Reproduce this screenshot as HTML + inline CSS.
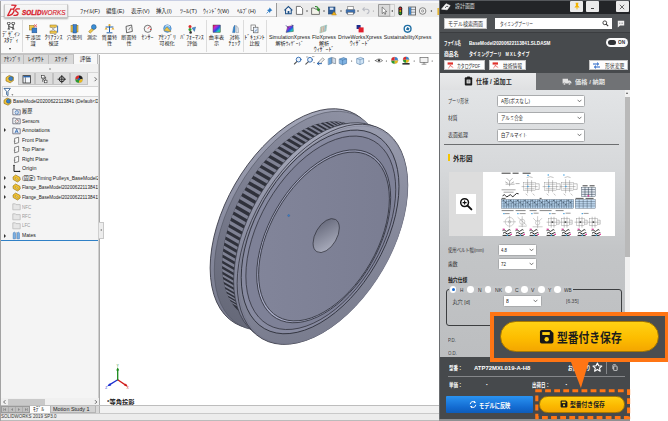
<!DOCTYPE html>
<html lang="ja">
<head>
<meta charset="utf-8">
<title>SOLIDWORKS</title>
<style>
*{box-sizing:border-box;margin:0;padding:0}
html,body{width:668px;height:421px;overflow:hidden;background:#fff}
body{position:relative;font-family:"Liberation Sans","Noto Sans CJK JP",sans-serif;font-size:6px;color:#222;line-height:1}
.abs{position:absolute}
.t{position:absolute;white-space:nowrap;line-height:1}
.c{transform:translateX(-50%);text-align:center}
/* ---- SolidWorks window ---- */
#sw{position:absolute;left:0;top:0;width:440px;height:421px;background:#fff}
#menubar{position:absolute;left:0;top:0;width:440px;height:17px;background:#f7f7f8;border-top:1px solid #c9cfe4;border-bottom:1px solid #d2d2d2}
#ribbon{position:absolute;left:0;top:17px;width:440px;height:37px;background:#fafafa;border-bottom:1px solid #c4c4c4}
.menu{font-size:5.8px;color:#1a1a1a;top:7.6px}
.rl{font-size:5.9px;color:#1a1a1a;line-height:6.4px;text-align:center;transform:translateX(-50%);top:33.5px;position:absolute;white-space:nowrap}
.rl .k{font-size:5.1px}
.rsep{position:absolute;top:20px;width:1px;height:32px;background:#dcdcdc}
.ico{position:absolute;top:24px;width:9px;height:9px;transform:translateX(-50%)}
#ctabs{position:absolute;left:0;top:54px;width:99px;height:10px;background:#e4e4e4}
.ctab{position:absolute;top:0;height:10px;background:#d9d9d9;border-right:1px solid #bdbdbd;border-top:1px solid #c4c4c4;font-size:5.9px;color:#222;text-align:center;line-height:9px}
#tree{position:absolute;left:0;top:64px;width:99px;height:342px;background:#f4f4f4;border-left:1px solid #bfbfbf}
.tr{max-width:none}
.tr{position:absolute;left:21px;font-size:5.6px;color:#222;white-space:nowrap;line-height:1}
.tri{position:absolute;left:3.4px;width:0;height:0;border-left:2.6px solid #333;border-top:2px solid transparent;border-bottom:2px solid transparent}
#view{position:absolute;left:99px;top:55px;width:341px;height:351px;background:#fff;border-left:1px solid #a9a9a9}
/* ---- right panel ---- */
#pn .t{margin-top:1px}
.tr{margin-top:.7px}
#pn{position:absolute;left:439px;top:0;width:191px;height:421px;background:#4b4e51;color:#fff}
</style>
</head>
<body>
<div id="sw">
<div id="menubar">
  <!-- logo tab -->
  <div class="abs" style="left:4.4px;top:2.6px;width:63.6px;height:14.8px;background:linear-gradient(#f7f7f7,#eeeeee);border:1px solid #c6c6c6;border-top:1px solid #e2e2e2;box-shadow:0 1px 1.6px rgba(0,0,0,.3);z-index:2"></div>
  <svg class="abs" style="left:7px;top:3px;z-index:3" width="14" height="13" viewBox="0 0 14 13"><path d="M4.8 1.2 L9 1.4 L6.8 4.6 M3.6 5.2 L6 5.1 Q7.6 5.4 6.8 7.8 Q5.8 10.6 2.6 11.3 L.7 11.5 L3.9 5.4 M12.4 4.9 L9.8 4.9 Q8.5 5.2 8.7 6.6 Q8.9 7.6 10.2 8.1 Q11.5 8.7 10.9 10.1 Q10.3 11.3 8.7 11.3 L6.9 11.3" fill="none" stroke="#d9232e" stroke-width="1.35" stroke-linecap="round" stroke-linejoin="round"/></svg>
  <div class="t" style="transform-origin:0 0;transform:scaleX(0.926);left:21.6px;top:8.6px;font-size:6.9px;font-style:italic;font-weight:bold;color:#d9232e;z-index:3"><span style="-webkit-text-stroke:.35px #d9232e">SOLID</span><span style="font-weight:normal;-webkit-text-stroke:.15px #d9232e">WORKS</span></div>






  <div class="t menu" style="transform-origin:0 0;transform:scaleX(1.053);left:79.5px">ﾌｧｲﾙ(F)</div>
  <div class="t menu" style="transform-origin:0 0;transform:scaleX(0.944);left:106px">編集(E)</div>
  <div class="t menu" style="transform-origin:0 0;transform:scaleX(0.97);left:130.5px">表示(V)</div>
  <div class="t menu" style="transform-origin:0 0;transform:scaleX(0.922);left:155.75px">挿入(I)</div>
  <div class="t menu" style="transform-origin:0 0;transform:scaleX(1.055);left:179.5px">ﾂｰﾙ(T)</div>
  <div class="t menu" style="transform-origin:0 0;transform:scaleX(0.982);left:203.25px">ｳｨﾝﾄﾞｳ(W)</div>
  <div class="t menu" style="transform-origin:0 0;transform:scaleX(0.954);left:236.5px">ﾍﾙﾌﾟ(H)</div>
  <!-- pin -->
  <svg class="abs" style="left:266px;top:6px" width="7" height="7" viewBox="0 0 7 7"><path d="M3.6 .6 L6.4 3.4 L5.2 3.8 L4.2 4.8 L4 6 L1 3 L2.2 2.8 L3.2 1.8 Z" fill="#2e7bc4"/><path d="M2.4 4.6 L.6 6.4" stroke="#2e7bc4" stroke-width=".8"/></svg>
  <!-- quick access toolbar -->
  <div class="abs" style="left:276px;top:2px;width:164px;height:14px;background:#ebebeb;border-left:1px solid #9a9a9a"></div>
  <svg class="abs" style="left:276px;top:2px" width="164" height="14" viewBox="0 0 164 14">
    <!-- home -->
    <path d="M8.4 7.4 L12.4 3.6 L16.4 7.4 M9.6 6.8 V10.8 H15.2 V6.8" fill="#fff" stroke="#1d4f86" stroke-width="1.1"/><rect x="11.6" y="8" width="1.8" height="2.8" fill="#1d4f86"/>
    <!-- new -->
    <path d="M20.4 3.4 H24.4 L26.6 5.6 V11.4 H20.4 Z" fill="#fff" stroke="#555" stroke-width=".8"/>
    <circle cx="31" cy="8" r=".7" fill="#333"/>
    <!-- open -->
    <path d="M35.6 5 H38.2 L39 6 H43.4 V11.4 H35.6 Z" fill="#f3f3ea" stroke="#555" stroke-width=".8"/><path d="M39 3.6 Q42.6 3.2 42.4 7.2 M40.8 6 L42.4 7.6 L43.8 5.8" fill="none" stroke="#2c8a2c" stroke-width="1.1"/>
    <circle cx="48" cy="8" r=".7" fill="#333"/>
    <!-- save -->
    <rect x="52.4" y="4" width="6.6" height="7" fill="#2c5d9b" stroke="#24446e" stroke-width=".6"/><rect x="53.8" y="4.6" width="3.6" height="2.2" fill="#dfe8f4"/><path d="M58 8.4 L60.4 12 H55.6 Z" fill="#f2b21b" stroke="#9a6a00" stroke-width=".4"/>
    <circle cx="65" cy="8" r=".7" fill="#333"/>
    <!-- print -->
    <rect x="70.2" y="6.4" width="8.6" height="4" rx=".8" fill="#3a6fb0" stroke="#24446e" stroke-width=".5"/><rect x="71.8" y="3.6" width="5.4" height="3" fill="#fff" stroke="#555" stroke-width=".5"/><rect x="71.8" y="9.2" width="5.4" height="2.6" fill="#fff" stroke="#555" stroke-width=".5"/>
    <circle cx="82" cy="8" r=".7" fill="#333"/>
    <!-- undo (disabled) -->
    <path d="M87 6.2 H91 Q93.2 6.4 93 8.6 Q92.8 10.4 90.8 10.6 M88.6 4.4 L86.8 6.2 L88.6 8" fill="none" stroke="#b9bcc4" stroke-width="1.1"/>
    <circle cx="97.4" cy="8" r=".6" fill="#999"/>
    <!-- select (boxed) -->
    <rect x="102.6" y="1.6" width="11.4" height="11.6" fill="#dadada" stroke="#8a8a8a" stroke-width=".8"/><path d="M106.2 4 L110.8 8.6 L108.8 8.8 L109.8 11 L108.8 11.4 L107.8 9.2 L106.2 10.6 Z" fill="#fff" stroke="#444" stroke-width=".6"/>
    <rect x="114" y="1.6" width="4.6" height="11.6" fill="#ececec" stroke="#b0b0b0" stroke-width=".5"/><circle cx="116.3" cy="8" r=".7" fill="#222"/>
    <!-- traffic light -->
    <rect x="122.4" y="3.6" width="3.8" height="8.6" rx="1.6" fill="#222"/><circle cx="124.3" cy="5.6" r="1.1" fill="#e02a2a"/><circle cx="124.3" cy="8" r="1" fill="#d8b100"/><circle cx="124.3" cy="10.3" r="1.1" fill="#2aa52a"/>
    <!-- table -->
    <rect x="132.6" y="4" width="7" height="8" fill="#e8eef6" stroke="#555" stroke-width=".8"/><path d="M135 4 V12 M135 6.6 H139.6 M135 9.2 H139.6" stroke="#555" stroke-width=".6"/><rect x="133" y="4.4" width="2" height="7.2" fill="#3a7ec2"/>
    <!-- options -->
    <circle cx="146.6" cy="8" r="3.3" fill="#f2f2f2" stroke="#777" stroke-width=".9"/><circle cx="146.6" cy="8" r="1.1" fill="none" stroke="#777" stroke-width=".7"/>
    <circle cx="155.4" cy="8" r=".7" fill="#333"/>
    <rect x="161.4" y="5" width="2" height="7" fill="#e5b534"/>
  </svg>
</div>

<div id="ribbon">
  <div class="rsep" style="left:22px;top:3px"></div>
  <div class="rsep" style="left:206px;top:3px"></div>
  <div class="rsep" style="left:243px;top:3px"></div>
  <div class="rsep" style="left:266px;top:3px"></div>
  <!-- labels (top relative to ribbon) -->
  <div class="rl" style="left:11px;top:14px">ﾃﾞｻﾞｲﾝ<br>ｽﾀﾃﾞｨ</div>
  <div class="abs" style="left:9.4px;top:30.6px;border-top:2px solid #333;border-left:1.6px solid transparent;border-right:1.6px solid transparent"></div>
  <div class="rl" style="left:33px;top:16.5px"><span class="k">干渉認</span><br><span class="k">識</span></div>
  <div class="rl" style="left:53.5px;top:16.5px">ｸﾘｱﾗﾝｽ<br><span class="k">検証</span></div>
  <div class="rl" style="left:74.5px;top:16.5px"><span class="k">穴整列</span></div>
  <div class="rl" style="left:92px;top:16.5px"><span class="k">測定</span></div>
  <div class="rl" style="left:109.5px;top:16.5px"><span class="k">質量特</span><br><span class="k">性</span></div>
  <div class="rl" style="left:129px;top:16.5px"><span class="k">断面特</span><br><span class="k">性</span></div>
  <div class="rl" style="left:147.5px;top:16.5px">ｾﾝｻｰ</div>
  <div class="rl" style="left:167px;top:16.5px">ｱｾﾝﾌﾞﾘ<br><span class="k">可視化</span></div>
  <div class="rl" style="left:192px;top:16.5px">ﾊﾟﾌｫｰﾏﾝｽ<br><span class="k">評価</span></div>
  <div class="rl" style="left:216.5px;top:16.5px"><span class="k">曲率表</span><br><span class="k">示</span></div>
  <div class="rl" style="left:234.5px;top:16.5px"><span class="k">対称</span><br>ﾁｪｯｸ</div>
  <div class="rl" style="left:254.5px;top:16.5px">ﾄﾞｷｭﾒﾝﾄ<br><span class="k">比較</span></div>
  <div class="rl" style="left:289.5px;top:16.5px"><span style="font-size:5.3px">SimulationXpress</span><br><span class="k">解析ｳｨｻﾞｰﾄﾞ</span></div>
  <div class="rl" style="left:324px;top:16.5px"><span style="font-size:5.3px">FloXpress</span><br><span class="k">解析</span><br>ｳｨｻﾞｰﾄﾞ</div>
  <div class="rl" style="left:360px;top:16.5px"><span style="font-size:5.3px">DriveWorksXpress</span><br>ｳｨｻﾞｰﾄﾞ</div>
  <div class="rl" style="left:407.5px;top:16.5px"><span style="font-size:5.3px">SustainabilityXpress</span></div>
  <!-- icons -->
  <svg class="abs" style="left:0;top:5px" width="440" height="14" viewBox="0 0 440 14">
    <!-- design study: two keys-ish -->
    <g fill="none" stroke="#333" stroke-width=".9"><circle cx="8.8" cy="1.4" r="1.4"/><circle cx="13.2" cy="1.4" r="1.4"/><path d="M8.8 2.8 V7 M13.2 2.8 V7 M8.8 4.6 L13.2 5.8 M7.6 7 H10 M12 7 H14.4"/></g>
    <!-- interference -->
    <rect x="29.4" y="3.4" width="4.6" height="4.6" fill="#f2c94c" stroke="#8a6d1a" stroke-width=".5"/><rect x="32" y="6" width="4.8" height="4.8" fill="#3b7fcc" stroke="#1d4f86" stroke-width=".5"/><path d="M34 2.4 L37 5.2 M37 2.4 L34 5.2" stroke="#e03030" stroke-width=".7"/>
    <!-- clearance -->
    <rect x="50" y="3" width="6.4" height="2.2" fill="#f2c94c" stroke="#8a6d1a" stroke-width=".5"/><rect x="50" y="9" width="6.4" height="2.2" fill="#f2c94c" stroke="#8a6d1a" stroke-width=".5"/><path d="M51.4 5.4 L55 8.8 M55 5.4 L51.4 8.8" stroke="#777" stroke-width=".6"/><path d="M57.6 3.6 V10.6" stroke="#2b66b0" stroke-width=".9"/>
    <!-- hole alignment -->
    <rect x="71" y="3.4" width="7" height="6.6" fill="#f2c94c" stroke="#8a6d1a" stroke-width=".5"/><rect x="73" y="2.6" width="3.4" height="8.4" fill="#3b7fcc" stroke="#1d4f86" stroke-width=".5"/>
    <!-- measure -->
    <path d="M88.6 9.6 L94.6 3.8 L96.2 5.4 L90.2 11.2 Z" fill="#f2c94c" stroke="#8a6d1a" stroke-width=".5"/><circle cx="93.8" cy="5" r="2.4" fill="#3b8fd6" stroke="#1d4f86" stroke-width=".5"/>
    <!-- mass props -->
    <path d="M109.5 3 V10 M105.6 5 H113.4 M106.6 10.8 H112.4" stroke="#1f5fa8" stroke-width="1"/><path d="M104.6 7.6 H107.6 L106.1 5.2 Z M111.4 7.6 H114.4 L112.9 5.2 Z" fill="#e2a827"/><circle cx="109.5" cy="3.2" r="1.1" fill="#e2a827"/>
    <!-- section props -->
    <path d="M126 4.4 L131.6 3 L132.4 9.4 L126.6 10.8 Z" fill="#f4f4f4" stroke="#444" stroke-width=".8"/><path d="M128.6 8 L130.6 5" stroke="#444" stroke-width=".6"/>
    <!-- sensor -->
    <circle cx="147.8" cy="6.8" r="3.6" fill="#f6f6f6" stroke="#555" stroke-width=".8"/><path d="M147.8 6.8 L149.8 4.4" stroke="#d33" stroke-width=".8"/><circle cx="150.6" cy="7.4" r=".7" fill="#d33"/>
    <!-- assembly visualization -->
    <circle cx="167.4" cy="6.6" r="3.8" fill="#6db2e8" stroke="#2b66b0" stroke-width=".5"/><path d="M164 8.6 L167 5 L171 9.8 Z" fill="#f2c94c" stroke="#8a6d1a" stroke-width=".4"/><path d="M165.4 4.2 Q167.6 2.6 170 4.4" stroke="#fff" stroke-width=".8" fill="none"/>
    <!-- performance -->
    <circle cx="190" cy="4.4" r="1.5" fill="#d92c2c"/><circle cx="190" cy="7.6" r="1.5" fill="#2d9a2d"/><circle cx="190.6" cy="10.4" r="1.3" fill="#333"/><path d="M192 6 L195.6 5 L194.4 9.4 Z" fill="#4a90d9" stroke="#1d4f86" stroke-width=".4"/>
    <!-- curvature -->
    <defs><linearGradient id="rb" x1="0" y1="0" x2="1" y2="1"><stop offset="0" stop-color="#e6222e"/><stop offset=".3" stop-color="#c22ad6"/><stop offset=".55" stop-color="#2a4fe0"/><stop offset=".75" stop-color="#1fc3c9"/><stop offset="1" stop-color="#3bd23b"/></linearGradient></defs>
    <rect x="213" y="3" width="7.4" height="7.4" fill="url(#rb)" stroke="#333" stroke-width=".4"/>
    <!-- symmetry check -->
    <path d="M232.6 10.6 L233.6 5 L235 3 V10.6 Z" fill="#3b8fd6" stroke="#1d4f86" stroke-width=".4"/><path d="M236 10.6 V3.6 L238.2 5.6 L238.6 10.6 Z" fill="#dfe6ee" stroke="#66707c" stroke-width=".4"/>
    <!-- doc compare -->
    <rect x="251" y="3" width="4.4" height="5.6" fill="#fff" stroke="#555" stroke-width=".6"/><rect x="253.6" y="5.2" width="4.4" height="5.6" fill="#e6eef8" stroke="#555" stroke-width=".6"/><path d="M255 9.6 L256.8 7.6" stroke="#2b66b0" stroke-width=".8"/>
    <!-- simulationxpress -->
    <path d="M286 10.4 L287.6 4.6 L293 3.4 L293.4 9.4 Z" fill="url(#rb)" stroke="#444" stroke-width=".4"/><path d="M286 3.4 L289 6.4 M292 2.6 L293.4 4" stroke="#2b2b8a" stroke-width=".8"/>
    <!-- floxpress -->
    <path d="M320.6 5 L326.8 3 L326 9 L319.8 11 Z" fill="#bfe1c6" stroke="#7a9" stroke-width=".4"/><path d="M322 4.8 L321.2 10.4 M324 4.2 L323.2 9.8" stroke="#d88" stroke-width=".7"/><path d="M325.6 3.6 L324.8 9.2" stroke="#79c" stroke-width=".7"/>
    <!-- driveworks -->
    <rect x="356.6" y="3" width="4" height="4" fill="#1d2d8c"/><rect x="358.6" y="5.4" width="5" height="5" fill="#e01f2d"/>
    <!-- sustainability -->
    <circle cx="407.6" cy="6.8" r="3.4" fill="#fff" stroke="#1f6ea3" stroke-width="1.4"/><path d="M405.8 7.6 L407.4 5 L409.6 6.4 L408.4 8.6 Z" fill="#1f6ea3"/>
  </svg>
</div>

<div id="ctabs">
<div class="ctab" style="left:1px;width:23px;"><span class="t c" style="transform:translateX(-50%) scaleX(0.934);left:50%;top:2.4px;">ｱｾﾝﾌﾞﾘ</span></div>
<div class="ctab" style="left:24px;width:24.5px;"><span class="t c" style="transform:translateX(-50%) scaleX(1.086);left:50%;top:2.4px;">ﾚｲｱｳﾄ</span></div>
<div class="ctab" style="left:48.5px;width:25px;"><span class="t c" style="transform:translateX(-50%) scaleX(1.103);left:50%;top:2.4px;">ｽｹｯﾁ</span></div>
<div class="ctab" style="left:73.5px;width:24.5px;background:#f8f8f8;border-top:none;"><span class="t c" style="transform:translateX(-50%) scaleX(1.0);left:50%;top:3.4px;font-size:5.6px;">評価</span></div>
</div>
<div id="tree">
<div class="abs" style="left:0;top:0;width:98px;height:9px;background:#f1f1f1;border-bottom:1px solid #d6d6d6"></div><div class="abs" style="left:47.5px;top:3.6px;width:2px;height:2px;border-radius:50%;background:#aaa"></div>
<div class="abs" style="left:0;top:9px;width:98px;height:13px;background:#f2f2f2"></div>
<div class="abs" style="left:1px;top:9px;width:16px;height:13px;background:#f7f7f7"></div>
<div class="abs" style="left:16.5px;top:9px;width:17.5px;height:12px;background:#dcdcdc;border:1px solid #c2c2c2;border-top:none"></div>
<div class="abs" style="left:34px;top:9px;width:17.5px;height:12px;background:#dcdcdc;border:1px solid #c2c2c2;border-top:none"></div>
<div class="abs" style="left:51.5px;top:9px;width:17.5px;height:12px;background:#dcdcdc;border:1px solid #c2c2c2;border-top:none"></div>
<div class="abs" style="left:69px;top:9px;width:17.5px;height:12px;background:#dcdcdc;border:1px solid #c2c2c2;border-top:none"></div>
<svg class="abs" style="left:0;top:9px" width="98" height="13" viewBox="0 0 98 13">
<path d="M5 4.6 L8.2 2.4 L12.4 4 L12.4 7.6 L9.2 9.8 L5 8 Z" fill="#f0c23a" stroke="#8a6a12" stroke-width=".6"/><circle cx="9.8" cy="5.6" r="2.1" fill="#3b82cc" stroke="#1d4f86" stroke-width=".5"/>
<rect x="22" y="2.6" width="7.4" height="7.4" fill="#f4f7fb" stroke="#333" stroke-width=".8"/><rect x="22.4" y="3" width="6.6" height="1.4" fill="#2b66b0"/><path d="M24.4 4.4 V10" stroke="#333" stroke-width=".6"/>
<rect x="40.6" y="2.4" width="2.6" height="2.6" fill="#fff" stroke="#333" stroke-width=".6"/><rect x="43.4" y="7.2" width="2.6" height="2.6" fill="#fff" stroke="#333" stroke-width=".6"/><path d="M41.8 5 V9 M41.8 7.4 L44.6 4.2 M44.6 3.6 V7" stroke="#333" stroke-width=".6" fill="none"/>
<circle cx="60.8" cy="6.2" r="2.6" fill="none" stroke="#111" stroke-width=".9"/><path d="M60.8 2 V10.4 M56.6 6.2 H65" stroke="#111" stroke-width=".8"/>
<circle cx="78" cy="6.2" r="3.6" fill="#fff" stroke="#555" stroke-width=".4"/><path d="M78 6.2 L78 2.6 A3.6 3.6 0 0 1 81.6 6.2 Z" fill="#222"/><path d="M78 6.2 L81.6 6.2 A3.6 3.6 0 0 1 78 9.8 Z" fill="#e8b81c"/><path d="M78 6.2 L78 9.8 A3.6 3.6 0 0 1 74.4 6.2 Z" fill="#2d9a2d"/><path d="M78 6.2 L74.4 6.2 A3.6 3.6 0 0 1 78 2.6 Z" fill="#d92c2c"/><circle cx="78" cy="6.2" r="1.2" fill="#2b66b0"/>
<path d="M93.6 4.2 L95.6 6.2 L93.6 8.2" fill="none" stroke="#444" stroke-width=".8"/>
</svg>
<div class="abs" style="left:1px;top:22px;width:97px;height:11px;background:#fafafa;border:1px solid #d4d4d4"></div>
<svg class="abs" style="left:2px;top:23px" width="12" height="10" viewBox="0 0 12 10"><path d="M1 1.4 H7.4 L5 4.4 V8.6 L3.6 7.6 V4.4 Z" fill="#fff" stroke="#1d4f86" stroke-width=".8" stroke-linejoin="round"/><path d="M8.4 7.4 H10.4 L9.4 8.6 Z" fill="#222"/></svg>
<svg class="abs" style="left:2px;top:32.8px" width="9" height="9" viewBox="0 0 9 9"><path d="M1 3.2 L4 1 L8 2.6 L8 6 L5 8.2 L1 6.4 Z" fill="#f0c23a" stroke="#8a6a12" stroke-width=".6"/><circle cx="5.4" cy="4.2" r="2" fill="#3b82cc" stroke="#1d4f86" stroke-width=".5"/></svg>
<div class="tr" style="transform-origin:0 0;transform:scaleX(0.86);left:11.5px;top:34.4px;color:#222">BaseModel20200622113841 (Default&lt;D</div>
<svg class="abs" style="left:11px;top:42.8px" width="9" height="9" viewBox="0 0 9 9"><path d="M.8 2 H3.4 L4 2.8 H8.2 V7.8 H.8 Z" fill="#f1f4f8" stroke="#556" stroke-width=".7"/><circle cx="4.8" cy="5.4" r="1.7" fill="#fff" stroke="#2b66b0" stroke-width=".7"/><path d="M4.8 4.4 V5.4 L5.6 5.8" stroke="#2b66b0" stroke-width=".5" fill="none"/></svg>
<div class="tr" style="transform-origin:0 0;transform:scaleX(0.919);left:21px;top:44.4px;color:#222">履歴</div>
<svg class="abs" style="left:11px;top:52.3px" width="9" height="9" viewBox="0 0 9 9"><path d="M.8 2 H3.4 L4 2.8 H8.2 V7.8 H.8 Z" fill="#f1f4f8" stroke="#556" stroke-width=".7"/><circle cx="4.8" cy="5.4" r="1.7" fill="#fff" stroke="#555" stroke-width=".6"/><path d="M4.8 5.4 L5.8 4.4" stroke="#d33" stroke-width=".7"/></svg>
<div class="tr" style="transform-origin:0 0;transform:scaleX(0.852);left:21px;top:53.9px;color:#222">Sensors</div>
<svg class="abs" style="left:11px;top:61.8px" width="9" height="9" viewBox="0 0 9 9"><path d="M.8 2 H3.4 L4 2.8 H8.2 V7.8 H.8 Z" fill="#f1f4f8" stroke="#556" stroke-width=".7"/><path d="M3 7 L4.6 3.4 L6.2 7 M3.6 5.8 H5.6" stroke="#2b66b0" stroke-width=".8" fill="none"/></svg>
<div class="tr" style="transform-origin:0 0;transform:scaleX(0.948);left:21px;top:63.4px;color:#222">Annotations</div>
<div class="tri" style="top:64.3px"></div>
<svg class="abs" style="left:11px;top:71.5px" width="9" height="9" viewBox="0 0 9 9"><path d="M2.6 2.4 L6.6 1.2 V6.6 L2.6 7.8 Z" fill="#fbfbfb" stroke="#555" stroke-width=".7"/><path d="M1.8 5.2 H3.4" stroke="#555" stroke-width=".5"/></svg>
<div class="tr" style="transform-origin:0 0;transform:scaleX(0.909);left:21px;top:73.1px;color:#222">Front Plane</div>
<svg class="abs" style="left:11px;top:81.0px" width="9" height="9" viewBox="0 0 9 9"><path d="M2.6 2.4 L6.6 1.2 V6.6 L2.6 7.8 Z" fill="#fbfbfb" stroke="#555" stroke-width=".7"/><path d="M1.8 5.2 H3.4" stroke="#555" stroke-width=".5"/></svg>
<div class="tr" style="transform-origin:0 0;transform:scaleX(0.904);left:21px;top:82.6px;color:#222">Top Plane</div>
<svg class="abs" style="left:11px;top:90.5px" width="9" height="9" viewBox="0 0 9 9"><path d="M2.6 2.4 L6.6 1.2 V6.6 L2.6 7.8 Z" fill="#fbfbfb" stroke="#555" stroke-width=".7"/><path d="M1.8 5.2 H3.4" stroke="#555" stroke-width=".5"/></svg>
<div class="tr" style="transform-origin:0 0;transform:scaleX(0.909);left:21px;top:92.1px;color:#222">Right Plane</div>
<svg class="abs" style="left:11px;top:100.0px" width="9" height="9" viewBox="0 0 9 9"><path d="M2 1.2 V7.4 H8" fill="none" stroke="#111" stroke-width="1"/><path d="M2 .6 L1.2 2 H2.8 Z M8.6 7.4 L7.2 6.6 V8.2 Z" fill="#111"/></svg>
<div class="tr" style="transform-origin:0 0;transform:scaleX(0.972);left:21px;top:101.6px;color:#222">Origin</div>
<svg class="abs" style="left:11px;top:109.5px" width="9" height="9" viewBox="0 0 9 9"><path d="M1 3 L3.6 1 L8 3.4 L8.2 6 L5.6 8 L1.2 5.6 Z" fill="#f2c230" stroke="#8a6a12" stroke-width=".6"/><path d="M3.4 3.6 L6 5 L6 6.4 L3.4 5 Z" fill="#fbe9a6" stroke="#8a6a12" stroke-width=".4"/></svg>
<div class="tr" style="transform-origin:0 0;transform:scaleX(0.892);left:21px;top:111.1px;color:#222">(固定) Timing Pulleys_BaseModel2</div>
<div class="tri" style="top:112.0px"></div>
<svg class="abs" style="left:11px;top:118.8px" width="9" height="9" viewBox="0 0 9 9"><path d="M1 3 L3.6 1 L8 3.4 L8.2 6 L5.6 8 L1.2 5.6 Z" fill="#f2c230" stroke="#8a6a12" stroke-width=".6"/><path d="M3.4 3.6 L6 5 L6 6.4 L3.4 5 Z" fill="#fbe9a6" stroke="#8a6a12" stroke-width=".4"/></svg>
<div class="tr" style="transform-origin:0 0;transform:scaleX(0.829);left:21px;top:120.4px;color:#222">Flange_BaseModel202006221138411</div>
<div class="tri" style="top:121.3px"></div>
<svg class="abs" style="left:11px;top:128.3px" width="9" height="9" viewBox="0 0 9 9"><path d="M1 3 L3.6 1 L8 3.4 L8.2 6 L5.6 8 L1.2 5.6 Z" fill="#f2c230" stroke="#8a6a12" stroke-width=".6"/><path d="M3.4 3.6 L6 5 L6 6.4 L3.4 5 Z" fill="#fbe9a6" stroke="#8a6a12" stroke-width=".4"/></svg>
<div class="tr" style="transform-origin:0 0;transform:scaleX(0.829);left:21px;top:129.9px;color:#222">Flange_BaseModel202006221138411</div>
<div class="tri" style="top:130.8px"></div>
<svg class="abs" style="left:11px;top:138.3px" width="9" height="9" viewBox="0 0 9 9"><path d="M.8 1.8 H3.4 L4 2.6 H8.2 V7.8 H.8 Z" fill="#e6e6e6" stroke="#b5b5b5" stroke-width=".7"/></svg>
<div class="tr" style="transform-origin:0 0;transform:scaleX(0.809);left:21px;top:139.9px;color:#9a9a9a">NFC</div>
<svg class="abs" style="left:11px;top:147.8px" width="9" height="9" viewBox="0 0 9 9"><path d="M.8 1.8 H3.4 L4 2.6 H8.2 V7.8 H.8 Z" fill="#e6e6e6" stroke="#b5b5b5" stroke-width=".7"/></svg>
<div class="tr" style="transform-origin:0 0;transform:scaleX(0.765);left:21px;top:149.4px;color:#9a9a9a">RFC</div>
<svg class="abs" style="left:11px;top:157.1px" width="9" height="9" viewBox="0 0 9 9"><path d="M.8 1.8 H3.4 L4 2.6 H8.2 V7.8 H.8 Z" fill="#e6e6e6" stroke="#b5b5b5" stroke-width=".7"/></svg>
<div class="tr" style="transform-origin:0 0;transform:scaleX(0.785);left:21px;top:158.7px;color:#9a9a9a">LFC</div>
<svg class="abs" style="left:11px;top:167.0px" width="9" height="9" viewBox="0 0 9 9"><path d="M2.4 1.2 Q1 1.2 1.2 3 V7.8 H3.4 V3 Q3.6 1.2 2.4 1.2 Z M6.4 1.2 Q5 1.2 5.2 3 V7.8 H7.4 V3 Q7.6 1.2 6.4 1.2 Z" fill="#7fb6e6" stroke="#2b66b0" stroke-width=".5"/><path d="M4.3 1 V8" stroke="#777" stroke-width=".4"/></svg>
<div class="tr" style="transform-origin:0 0;transform:scaleX(0.906);left:21px;top:168.6px;color:#222">Mates</div>
<div class="tri" style="top:169.5px"></div>
<div class="abs" style="left:0;top:176.2px;width:98px;height:1.2px;background:#2f80c6"></div>
<div class="abs" style="left:97px;top:0;width:2px;height:342px;background:#e6e6e6;border-left:1px solid #cfcfcf"></div>
<div class="abs" style="left:98px;top:158px;width:5px;height:17px;background:#ededed;border:1px solid #c8c8c8;border-left:none;z-index:3"></div><div class="abs" style="left:99.4px;top:165px;border-right:2px solid #888;border-top:1.6px solid transparent;border-bottom:1.6px solid transparent;z-index:4"></div>
<div class="abs" style="left:0;top:334px;width:98px;height:8px;background:#f0f0f0"></div><div class="abs" style="left:7px;top:335px;width:37px;height:6px;background:#c9c9c9"></div>
<svg class="abs" style="left:0;top:334px" width="98" height="8" viewBox="0 0 98 8"><path d="M4.4 2.2 L2.6 4 L4.4 5.8 M94 2.2 L95.8 4 L94 5.8" fill="none" stroke="#444" stroke-width=".8"/></svg>
</div>
<div id="view">
<svg class="abs" style="left:0;top:0" width="340" height="351" viewBox="100 55 340 351">
<defs><linearGradient id="gf" x1="0" y1="0" x2="1" y2="1"><stop offset="0" stop-color="#83869b"/><stop offset="1" stop-color="#797c91"/></linearGradient><linearGradient id="ghl" x1="0" y1="0" x2="1" y2="1"><stop offset="0" stop-color="#aeb1cc"/><stop offset=".5" stop-color="#a0a3bd"/><stop offset="1" stop-color="#8b8ea6"/></linearGradient><linearGradient id="grim" gradientUnits="userSpaceOnUse" x1="210" y1="300" x2="410" y2="150"><stop offset="0" stop-color="#74778a"/><stop offset=".5" stop-color="#8a8da0"/><stop offset="1" stop-color="#a9acbd"/></linearGradient><linearGradient id="gband" gradientUnits="userSpaceOnUse" x1="230" y1="300" x2="410" y2="150"><stop offset="0" stop-color="#787b8d"/><stop offset=".6" stop-color="#8b8ea0"/><stop offset="1" stop-color="#9ea1b3"/></linearGradient><linearGradient id="gb" x1="1" y1="0" x2="0" y2="0"><stop offset="0" stop-color="#8e91a3"/><stop offset=".5" stop-color="#7b7e90"/><stop offset="1" stop-color="#666979"/></linearGradient><linearGradient id="gh" x1="1" y1="0" x2="0" y2="1"><stop offset="0" stop-color="#5f6274"/><stop offset="1" stop-color="#b3b6c6"/></linearGradient></defs>
<ellipse cx="295.4" cy="218.8" rx="120.6" ry="69.6" transform="rotate(-60 295.4 218.8)" fill="url(#grim)" stroke="#3a3c48" stroke-width="0.8" />
<ellipse cx="299.2" cy="220.9" rx="120.1" ry="69.3" transform="rotate(-60 299.2 220.9)" fill="url(#gb)" stroke="#4a4d5a" stroke-width="0.5" />
<polygon points="353.7,126.5 350.7,125.0 347.7,123.7 344.5,122.7 341.1,122.0 337.7,121.6 334.2,121.4 330.5,121.5 326.8,121.9 323.0,122.5 319.1,123.4 315.2,124.6 311.2,126.0 307.2,127.7 303.2,129.7 299.2,131.9 295.1,134.4 291.1,137.0 287.1,140.0 283.1,143.1 279.2,146.5 275.3,150.0 271.5,153.8 267.8,157.7 264.2,161.8 260.6,166.1 257.2,170.5 253.9,175.1 250.7,179.7 247.6,184.5 244.7,189.4 241.9,194.4 239.3,199.5 236.8,204.6 234.5,209.7 232.4,214.9 230.5,220.1 228.8,225.4 227.2,230.5 225.9,235.7 224.7,240.8 223.8,245.9 223.0,250.9 222.5,255.9 222.2,260.7 222.1,265.4 222.2,270.0 222.5,274.5 223.0,278.8 223.8,282.9 224.7,286.9 225.9,290.7 227.2,294.3 228.8,297.8 230.5,301.0 232.4,303.9 234.5,306.7 236.8,309.2 239.3,311.5 241.9,313.5 244.7,315.3 263.7,326.3 260.9,324.5 258.3,322.5 255.8,320.2 253.6,317.7 251.5,314.9 249.5,312.0 247.8,308.8 246.2,305.3 244.9,301.7 243.8,297.9 242.8,293.9 242.1,289.8 241.6,285.5 241.2,281.0 241.1,276.4 241.2,271.7 241.6,266.9 242.1,261.9 242.8,256.9 243.8,251.8 244.9,246.7 246.2,241.5 247.8,236.4 249.5,231.1 251.5,225.9 253.6,220.7 255.8,215.6 258.3,210.5 260.9,205.4 263.7,200.4 266.6,195.5 269.7,190.7 272.9,186.1 276.2,181.5 279.7,177.1 283.2,172.8 286.9,168.7 290.6,164.8 294.4,161.0 298.3,157.5 302.2,154.1 306.1,151.0 310.1,148.0 314.2,145.4 318.2,142.9 322.2,140.7 326.3,138.7 330.3,137.0 334.2,135.6 338.2,134.4 342.0,133.5 345.8,132.9 349.6,132.5 353.2,132.4 356.7,132.6 360.2,133.0 363.5,133.7 366.7,134.7 369.8,136.0 372.7,137.5" fill="#2f313b"/>
<path d="M353.3 126.3 L351.5 125.4 L370.6 136.4 L372.3 137.3Z M349.7 124.5 L347.9 123.8 L366.9 134.8 L368.8 135.5Z M346.0 123.2 L344.0 122.6 L363.1 133.6 L365.0 134.2Z M342.0 122.2 L340.0 121.8 L359.0 132.8 L361.1 133.2Z M337.9 121.6 L335.8 121.4 L354.9 132.4 L357.0 132.6Z M333.7 121.4 L331.5 121.4 L350.5 132.4 L352.7 132.4Z M329.3 121.6 L327.0 121.8 L346.1 132.8 L348.3 132.6Z M324.8 122.2 L322.5 122.6 L341.5 133.6 L343.8 133.2Z M320.2 123.1 L317.8 123.8 L336.8 134.8 L339.2 134.1Z M315.5 124.5 L313.1 125.3 L332.1 136.3 L334.5 135.5Z M310.7 126.2 L308.3 127.3 L327.3 138.3 L329.7 137.2Z M305.9 128.4 L303.5 129.6 L322.5 140.6 L324.9 139.4Z M301.0 130.8 L298.6 132.2 L317.7 143.2 L320.1 141.8Z M296.2 133.7 L293.8 135.2 L312.8 146.2 L315.2 144.7Z M291.4 136.9 L289.0 138.6 L308.0 149.6 L310.4 147.9Z M286.6 140.4 L284.2 142.2 L303.2 153.2 L305.6 151.4Z M281.8 144.2 L279.5 146.2 L298.5 157.2 L300.9 155.2Z M277.1 148.3 L274.8 150.5 L293.9 161.5 L296.2 159.3Z M272.6 152.7 L270.3 155.1 L289.3 166.1 L291.6 163.7Z M268.1 157.4 L265.9 159.9 L284.9 170.9 L287.1 168.4Z M263.7 162.4 L261.6 164.9 L280.6 175.9 L282.7 173.4Z M259.5 167.5 L257.4 170.2 L276.5 181.2 L278.5 178.5Z M255.4 172.9 L253.4 175.7 L272.5 186.7 L274.4 183.9Z M251.5 178.5 L249.6 181.3 L268.7 192.3 L270.5 189.5Z M247.8 184.2 L246.0 187.1 L265.1 198.1 L266.8 195.2Z M244.3 190.1 L242.6 193.1 L261.7 204.1 L263.3 201.1Z M241.0 196.1 L239.4 199.1 L258.5 210.1 L260.0 207.1Z M237.9 202.2 L236.5 205.3 L255.5 216.3 L257.0 213.2Z M235.1 208.4 L233.8 211.5 L252.8 222.5 L254.2 219.4Z M232.6 214.6 L231.4 217.7 L250.4 228.7 L251.6 225.6Z M230.2 220.8 L229.2 224.0 L248.2 235.0 L249.3 231.8Z M228.2 227.1 L227.3 230.2 L246.3 241.2 L247.3 238.1Z M226.5 233.3 L225.7 236.4 L244.7 247.4 L245.5 244.3Z M225.0 239.5 L224.4 242.5 L243.4 253.5 L244.0 250.5Z M223.8 245.6 L223.4 248.6 L242.4 259.6 L242.9 256.6Z M223.0 251.6 L222.6 254.5 L241.7 265.5 L242.0 262.6Z M222.4 257.5 L222.2 260.4 L241.2 271.4 L241.4 268.5Z M222.1 263.2 L222.1 266.0 L241.1 277.0 L241.2 274.2Z M222.1 268.8 L222.3 271.5 L241.3 282.5 L241.2 279.8Z M222.5 274.2 L222.8 276.8 L241.8 287.8 L241.5 285.2Z M223.1 279.3 L223.6 281.8 L242.6 292.8 L242.2 290.3Z M224.1 284.3 L224.6 286.7 L243.7 297.7 L243.1 295.3Z M225.3 289.0 L226.0 291.2 L245.1 302.2 L244.3 300.0Z M226.8 293.4 L227.7 295.5 L246.7 306.5 L245.9 304.4Z M228.6 297.5 L229.7 299.5 L248.7 310.5 L247.7 308.5Z M230.7 301.4 L231.9 303.2 L250.9 314.2 L249.8 312.4Z" fill="#7f8294"/>
<ellipse cx="318.2" cy="231.9" rx="119.6" ry="69.1" transform="rotate(-60 318.2 231.9)" fill="url(#grim)" stroke="#3a3c48" stroke-width="0.7" />
<ellipse cx="322.4" cy="234.3" rx="120.6" ry="69.6" transform="rotate(-60 322.4 234.3)" fill="url(#grim)" stroke="#3a3c48" stroke-width="0.8" />
<ellipse cx="323.4" cy="234.9" rx="119.4" ry="68.9" transform="rotate(-60 323.4 234.9)" fill="url(#gband)" stroke="#6e7184" stroke-width="0.35" />
<ellipse cx="320.1" cy="231.9" rx="111.6" ry="64.4" transform="rotate(-60 320.1 231.9)" fill="#878aa0" stroke="#2b2d37" stroke-width="0.8" />
<ellipse cx="320.8" cy="232.8" rx="106.0" ry="61.2" transform="rotate(-60 320.8 232.8)" fill="#7e8197" stroke="#2e303a" stroke-width="0.7" />
<ellipse cx="323.7" cy="236.3" rx="94.7" ry="54.7" transform="rotate(-60 323.7 236.3)" fill="url(#ghl)" stroke="#2b2d37" stroke-width="0.75" />
<ellipse cx="324.0" cy="236.5" rx="92.5" ry="53.4" transform="rotate(-60 324.0 236.5)" fill="url(#gf)" stroke="#2b2d37" stroke-width="0.75" />
<ellipse cx="326.2" cy="235.6" rx="18.6" ry="10.7" transform="rotate(-60 326.2 235.6)" fill="url(#gh)" stroke="#33353f" stroke-width="0.7" />
<circle cx="288.7" cy="215.6" r="1" fill="#3b82cc" stroke="#1d4f86" stroke-width=".3"/>
<g stroke-linecap="round">
<circle cx="298.6" cy="59.6" r="2.4" fill="#eaf2fb" stroke="#2b66b0" stroke-width=".9"/><path d="M296.8 61.6 L294.4 64" stroke="#555" stroke-width="1.1"/>
<circle cx="310" cy="59.8" r="2.4" fill="#eaf2fb" stroke="#2b66b0" stroke-width=".9"/><path d="M308.2 61.8 L305.8 64.2" stroke="#555" stroke-width="1.1"/><path d="M306.4 57 h1.4 M312.4 56.6 h1.6 M313.6 62.6 h1" stroke="#555" stroke-width=".5"/>
<path d="M318 62.4 L322.6 58 L324.4 59.4 L320.4 63.4 Z" fill="#f4f4f4" stroke="#666" stroke-width=".6"/><path d="M317.4 63.6 H321.6 M317.4 63.6 L319 62.2 M317.4 63.6 L319 64.8" stroke="#2b66b0" stroke-width=".9" fill="none"/>
<path d="M328.6 58.6 L331.6 57.4 V63.6 L328.6 64.6 Z" fill="#6da7dc" stroke="#2b5d91" stroke-width=".5"/><path d="M332.6 57.6 L335.6 58.6 V63.8 L332.6 63 Z" fill="#cfdbe8" stroke="#55606c" stroke-width=".5"/>
<path d="M339.6 59 L343.6 57.6 L346.6 58.8 V63.4 L342.6 64.8 L339.6 63.6 Z" fill="#7fb2e2" stroke="#2b5d91" stroke-width=".5"/><path d="M339.6 59 L342.6 60.2 L346.6 58.8 M342.6 60.2 V64.8" stroke="#2b5d91" stroke-width=".4" fill="none"/>
<circle cx="351.6" cy="61" r=".6" fill="#444"/>
<path d="M357 58.6 L360.6 57.4 L363.6 58.6 V63.2 L360 64.6 L357 63.4 Z" fill="#cfe3f4" stroke="#3c6c9c" stroke-width=".5"/><path d="M357 58.6 L360 59.8 L363.6 58.6 M360 59.8 V64.6" stroke="#3c6c9c" stroke-width=".4" fill="none"/>
<circle cx="369" cy="61" r=".6" fill="#444"/>
<path d="M375.4 60.6 Q379 57.2 382.6 60.6 Q379 63.6 375.4 60.6 Z" fill="#f2f2f2" stroke="#444" stroke-width=".6"/><circle cx="379" cy="60.4" r="1.1" fill="#333"/>
<circle cx="386.4" cy="61" r=".6" fill="#444"/>
<circle cx="394.6" cy="60.4" r="3.3" fill="#fff" stroke="#777" stroke-width=".3"/><path d="M394.6 60.4 V57.1 A3.3 3.3 0 0 1 397.9 60.4 Z" fill="#3b82cc"/><path d="M394.6 60.4 H397.9 A3.3 3.3 0 0 1 394.6 63.7 Z" fill="#e8b81c"/><path d="M394.6 60.4 V63.7 A3.3 3.3 0 0 1 391.3 60.4 Z" fill="#2d9a2d"/><path d="M394.6 60.4 H391.3 A3.3 3.3 0 0 1 394.6 57.1 Z" fill="#d92c2c"/>
<circle cx="406" cy="59.8" r="3" fill="#fff" stroke="#777" stroke-width=".3"/><path d="M406 59.8 V56.8 A3 3 0 0 1 409 59.8 Z" fill="#3b82cc"/><path d="M406 59.8 H409 A3 3 0 0 1 406 62.8 Z" fill="#e8b81c"/><path d="M406 59.8 V62.8 A3 3 0 0 1 403 59.8 Z" fill="#2d9a2d"/><path d="M406 59.8 H403 A3 3 0 0 1 406 56.8 Z" fill="#d92c2c"/><rect x="402.4" y="63" width="7.2" height="1.6" fill="#333"/>
<circle cx="414.2" cy="61" r=".6" fill="#444"/>
<rect x="420" y="57.4" width="8" height="5" fill="#f3f3f3" stroke="#666" stroke-width=".7"/><path d="M424 62.4 V64 M422 64.2 H426" stroke="#666" stroke-width=".7"/>
<circle cx="432.2" cy="61" r=".6" fill="#444"/>
</g>
<g stroke-linecap="round"><path d="M117.7 379.8 L108.6 385.4" stroke="#1c2fd0" stroke-width="1.3"/><path d="M107.2 386.2 L110.2 383 L111.2 385.4 Z" fill="#1c2fd0"/>
<path d="M117.7 379.8 L126.4 385.6" stroke="#d01c1c" stroke-width="1.3"/><path d="M127.8 386.6 L124.2 385.8 L125.8 383.4 Z" fill="#d01c1c"/>
<path d="M117.7 379.8 V369.4" stroke="#1a8a1a" stroke-width="1.3"/><path d="M117.7 367.2 L116.2 370.4 H119.2 Z" fill="#1a8a1a"/></g>
<text x="116.6" y="367" font-size="3.4" fill="#1a8a1a" font-family="Liberation Sans, sans-serif">Y</text>
<text x="126.6" y="388.6" font-size="3.4" fill="#d01c1c" font-family="Liberation Sans, sans-serif">X</text>
<text x="105.2" y="388.6" font-size="3.4" fill="#1c2fd0" font-family="Liberation Sans, sans-serif">Z</text>
</svg>
<div class="t" style="transform-origin:0 0;transform:scaleX(1.012);left:6.6px;top:343.6px;font-size:6.2px;font-weight:bold;color:#222">*等角投影</div>
</div>
<!-- bottom: tabs row 406..413, status 413..421 -->
<div class="abs" style="left:0;top:405px;width:440px;height:8px;background:#f1f1f1;border-top:1px solid #bdbdbd"></div>
<div class="abs" style="left:1px;top:406px;width:28.5px;height:7px;background:#bfbfbf;border:1px solid #9a9a9a"></div>
<svg class="abs" style="left:1px;top:406px" width="29" height="7" viewBox="0 0 29 7"><g fill="#8a8a8a"><path d="M3 3.5 L5 2 V5 Z M2.4 2 h.6 v3 h-.6z M10 3.5 L12 2 V5 Z M19 3.5 L17 2 V5 Z M26 3.5 L24 2 V5 Z M26 2 h.6 v3 h-.6z"/></g><path d="M7.5 .5 V6.5 M14.5 .5 V6.5 M21.5 .5 V6.5" stroke="#9a9a9a" stroke-width=".5"/></svg>
<div class="abs" style="left:30px;top:406px;width:19.5px;height:7px;background:#fdfdfd"></div>
<div class="t" style="transform-origin:0 0;transform:scaleX(1.019);left:33.4px;top:407px;font-size:5.4px;color:#222">ﾓﾃﾞﾙ</div>
<div class="abs" style="left:49.5px;top:406px;width:46.5px;height:7px;background:#d2d2d2;border:1px solid #b4b4b4;border-top:none"></div>
<div class="t" style="transform-origin:0 0;transform:scaleX(1.055);left:52.6px;top:407.1px;font-size:5.2px;color:#222">Motion Study 1</div>
<div class="abs" style="left:96px;top:406px;width:4px;height:7px;background:#d8d8d8;border-right:1px solid #b4b4b4"></div>
<div class="abs" style="left:0;top:413px;width:440px;height:8px;background:#ececec;border-top:1px solid #c9c9c9;border-bottom:1px solid #bbb"></div>
<div class="t" style="transform-origin:0 0;transform:scaleX(0.924);left:1px;top:414.6px;font-size:4.9px;color:#333">SOLIDWORKS 2019 SP3.0</div>

<div class="abs" id="leftedge" style="left:0;top:1px;width:1px;height:420px;background:#a3a3a3;z-index:5"></div>

</div>
<div id="pn">
<!-- panel coordinates: page x - 439 -->
<div class="abs" style="left:0;top:0;width:1px;height:421px;background:#6a6d70"></div>
<!-- title bar -->
<div class="abs" style="left:1px;top:0;width:190px;height:13.6px;background:#232528;border-top:.8px solid #55585c"></div>
<svg class="abs" style="left:2.4px;top:3.4px" width="10" height="8" viewBox="0 0 10 8"><path d="M.5 6.2 L5 .7 L9.2 2.6 L6.2 6.8 Z" fill="#f4f4f4" stroke="#f4f4f4" stroke-width=".6" stroke-linejoin="round"/><path d="M4 4.8 Q5.6 2.6 7.2 3.4" fill="none" stroke="#232528" stroke-width=".8"/></svg>
<div class="t" style="transform-origin:0 0;transform:scaleX(0.853);left:15.6px;top:3.3px;font-size:5.8px;color:#d4d4d4">設計画面</div>
<div class="abs" style="left:131.4px;top:1.4px;width:12.4px;height:10.2px;background:#ebebeb;border-radius:1px"></div>
<svg class="abs" style="left:133.6px;top:2.4px" width="8" height="8" viewBox="0 0 8 8"><path d="M2.6 .8 H5.4 L5 3.4 L6.6 5.4 H1.4 L3 3.4 Z" fill="#f4b400"/><path d="M4 5.4 V7.4" stroke="#f4b400" stroke-width=".9"/></svg>
<div class="abs" style="left:147px;top:1.4px;width:12.8px;height:10.2px;background:#ebebeb;border-radius:1px"></div>
<div class="abs" style="left:151.8px;top:8px;width:3.4px;height:.9px;background:#444"></div>
<div class="abs" style="left:176.8px;top:1.4px;width:12.8px;height:10.2px;background:#ebebeb;border-radius:1px"></div>
<svg class="abs" style="left:180.2px;top:3.6px" width="6" height="6" viewBox="0 0 6 6"><path d="M.8 .8 L5.2 5.2 M5.2 .8 L.8 5.2" stroke="#444" stroke-width=".8"/></svg>
<!-- search region -->
<div class="abs" style="left:1px;top:14px;width:190px;height:18px;background:#4f5255"></div>
<div class="abs" style="left:4.6px;top:18px;width:43px;height:10.6px;background:#fdfdfd;border:1px solid #c4c4c4"></div>
<div class="t" style="transform-origin:0 0;transform:scaleX(0.927);left:8.6px;top:20.6px;font-size:5.4px;color:#333">モデル検索画面</div>
<div class="abs" style="left:55.6px;top:18px;width:117px;height:11px;background:#fff"></div>
<div class="t" style="transform-origin:0 0;transform:scaleX(0.68);left:61px;top:20.8px;font-size:5.4px;color:#333">タイミングプーリー</div>
<svg class="abs" style="left:162.6px;top:20px" width="7" height="7" viewBox="0 0 7 7"><circle cx="2.8" cy="2.8" r="1.9" fill="none" stroke="#333" stroke-width=".9"/><path d="M4.2 4.2 L6.2 6.2" stroke="#333" stroke-width="1.1"/></svg>
<svg class="abs" style="left:177.6px;top:19.8px" width="8" height="8" viewBox="0 0 8 8"><path d="M.8 .8 H7.2 V5.4 H3 L.8 7.4 Z" fill="#f0f0f0"/><path d="M2.2 3.2 h.8 M3.7 3.2 h.8 M5.2 3.2 h.8" stroke="#4f5255" stroke-width=".7"/></svg>
<!-- info region -->
<div class="abs" style="left:1px;top:32px;width:190px;height:41px;background:#474a4d;border-top:1px solid #3b3d40"></div>
<div class="t" style="transform-origin:0 0;transform:scaleX(0.607);left:4.6px;top:39.8px;font-size:5.6px;font-weight:bold;color:#fff">ファイル名</div>
<div class="t" style="transform-origin:0 0;transform:scaleX(0.897);left:29.6px;top:40px;font-size:5.2px;font-weight:bold;color:#fff">BaseModel20200622113841.SLDASM</div>
<div class="t" style="transform-origin:0 0;transform:scaleX(0.863);left:4.6px;top:50.8px;font-size:5.6px;font-weight:bold;color:#fff">商品名</div>
<div class="t" style="transform-origin:0 0;transform:scaleX(0.725);left:29.6px;top:50.8px;font-size:5.6px;font-weight:bold;color:#fff">タイミングプーリ　M X L タイプ</div>
<!-- toggle -->
<div class="abs" style="left:167px;top:38px;width:21.6px;height:9px;background:#fafafa;border-radius:4.5px"></div>
<div class="abs" style="left:169.4px;top:39.6px;width:7.4px;height:5.8px;background:#303236;border-radius:2.9px"></div>
<div class="t" style="transform-origin:0 0;transform:scaleX(1.016);left:178.6px;top:40.4px;font-size:4.6px;font-weight:bold;color:#333">ON</div>
<!-- buttons -->
<div class="abs" style="left:4.6px;top:60px;width:41.2px;height:10.4px;background:#fdfdfd;border:1px solid #c4c4c4"></div>
<svg class="abs" style="left:7.6px;top:62px" width="7" height="7" viewBox="0 0 7 7"><rect x=".6" y=".4" width="5.4" height="2.2" fill="#e0312b"/><path d="M1.2 6.2 Q3 5.4 3.4 3 Q4 5 6.2 5.4" fill="none" stroke="#e0312b" stroke-width=".6"/></svg>
<div class="t" style="transform-origin:0 0;transform:scaleX(0.711);left:18.4px;top:62.6px;font-size:5.4px;color:#333">カタログPDF</div>
<div class="abs" style="left:49.8px;top:60px;width:37.4px;height:10.4px;background:#fdfdfd;border:1px solid #c4c4c4"></div>
<svg class="abs" style="left:52.8px;top:62px" width="7" height="7" viewBox="0 0 7 7"><rect x=".6" y=".4" width="5.4" height="2.2" fill="#e0312b"/><path d="M1.2 6.2 Q3 5.4 3.4 3 Q4 5 6.2 5.4" fill="none" stroke="#e0312b" stroke-width=".6"/></svg>
<div class="t" style="transform-origin:0 0;transform:scaleX(0.881);left:63.8px;top:62.6px;font-size:5.4px;color:#333">技術情報</div>
<div class="abs" style="left:150px;top:60px;width:39px;height:10.4px;background:#fdfdfd;border:1px solid #c4c4c4"></div>
<svg class="abs" style="left:153.4px;top:61.6px" width="9" height="7" viewBox="0 0 9 7"><path d="M1 2 H6.4 M5 .6 L6.6 2 L5 3.4 M8 5 H2.6 M4 3.6 L2.4 5 L4 6.4" fill="none" stroke="#1d5fc4" stroke-width="1"/></svg>
<div class="t" style="transform-origin:0 0;transform:scaleX(0.904);left:165.6px;top:62.6px;font-size:5.4px;color:#333">形状変更</div>
<!-- tabs -->
<div class="abs" style="left:1px;top:73px;width:96px;height:17px;background:linear-gradient(#e9eaeb,#dfe0e2)"></div>
<div class="abs" style="left:97px;top:73px;width:94px;height:16.5px;background:#707275"></div>
<svg class="abs" style="left:25px;top:76.4px" width="9" height="10" viewBox="0 0 9 10"><rect x=".8" y="1.2" width="7.4" height="8.2" rx="1" fill="#1c1c1c"/><rect x="3" y=".4" width="3" height="1.8" rx=".5" fill="#1c1c1c"/><rect x="2.6" y="3.6" width="3.8" height="3.8" fill="#f2f2f2"/><path d="M3.4 4.8 H5.6 M3.4 6 H5.6" stroke="#1c1c1c" stroke-width=".5"/></svg>
<div class="t" style="transform-origin:0 0;transform:scaleX(0.96);left:37.2px;top:77.8px;font-size:6.4px;font-weight:bold;color:#2a2a2a">仕様 / 追加工</div>
<svg class="abs" style="left:123.4px;top:77.6px" width="10" height="8" viewBox="0 0 10 8"><path d="M.6 .8 H6 V5.6 H.6 Z M6 2.4 H8 L9.4 4 V5.6 H6 Z" fill="#e4e4e4"/><circle cx="2.4" cy="6" r="1.1" fill="#e4e4e4" stroke="#707275" stroke-width=".5"/><circle cx="7.4" cy="6" r="1.1" fill="#e4e4e4" stroke="#707275" stroke-width=".5"/></svg>
<div class="t" style="transform-origin:0 0;transform:scaleX(1.003);left:136px;top:78.2px;font-size:6.2px;font-weight:bold;color:#e2e2e2">価格 / 納期</div>
<!-- content area -->
<div id="cnt" class="abs" style="left:1px;top:89.5px;width:185px;height:268px;background:linear-gradient(180deg,#e2e4e6 0%,#d6d8da 30%,#c3c5c7 60%,#bcbec0 100%);overflow:hidden"></div>
<!-- scrollbar -->
<div class="abs" style="left:185.8px;top:89.5px;width:5.2px;height:268px;background:#f1f1f1"></div>
<div class="abs" style="left:185.8px;top:97px;width:5.2px;height:160.4px;background:#b9b9b9"></div>
<div class="abs" style="left:187.2px;top:92.4px;border-bottom:2px solid #555;border-left:1.3px solid transparent;border-right:1.3px solid transparent"></div>
<div class="t" style="transform-origin:0 0;transform:scaleX(0.76);left:8.6px;top:97.8px;font-size:5.4px;color:#333">プーリ形状</div>
<div class="abs" style="left:58.4px;top:94.7px;width:87.6px;height:12.2px;background:#fff;border:1px solid #a9abad;border-radius:1.5px"></div><div class="t" style="transform-origin:0 0;transform:scaleX(0.883);left:61.6px;top:97.8px;font-size:5.2px;color:#222">A形(ボスなし)</div><svg class="abs" style="left:137.8px;top:98.5px" width="5" height="4" viewBox="0 0 5 4"><path d="M.6 .8 L2.5 2.8 L4.4 .8" fill="none" stroke="#444" stroke-width=".7"/></svg>
<div class="t" style="transform-origin:0 0;transform:scaleX(0.889);left:8.6px;top:114.9px;font-size:5.4px;color:#333">材質</div>
<div class="abs" style="left:58.4px;top:111.9px;width:87.6px;height:11.9px;background:#fff;border:1px solid #a9abad;border-radius:1.5px"></div><div class="t" style="transform-origin:0 0;transform:scaleX(0.85);left:61.6px;top:114.9px;font-size:5.2px;color:#222">アルミ合金</div><svg class="abs" style="left:137.8px;top:115.6px" width="5" height="4" viewBox="0 0 5 4"><path d="M.6 .8 L2.5 2.8 L4.4 .8" fill="none" stroke="#444" stroke-width=".7"/></svg>
<div class="t" style="transform-origin:0 0;transform:scaleX(0.927);left:8.6px;top:132.3px;font-size:5.4px;color:#333">表面処理</div>
<div class="abs" style="left:58.4px;top:129.2px;width:87.6px;height:12.4px;background:#fff;border:1px solid #a9abad;border-radius:1.5px"></div><div class="t" style="transform-origin:0 0;transform:scaleX(0.837);left:61.6px;top:132.4px;font-size:5.2px;color:#222">白アルマイト</div><svg class="abs" style="left:137.8px;top:133.1px" width="5" height="4" viewBox="0 0 5 4"><path d="M.6 .8 L2.5 2.8 L4.4 .8" fill="none" stroke="#444" stroke-width=".7"/></svg>
<div class="abs" style="left:5px;top:144.1px;width:175.3px;height:.9px;background:#6c6e70"></div>
<div class="abs" style="left:9.3px;top:154.3px;width:2.2px;height:6.6px;background:#f5c400"></div>
<div class="t" style="transform-origin:0 0;transform:scaleX(1.017);left:14.0px;top:154.5px;font-size:6.4px;font-weight:bold;color:#222">外形図</div>
<div class="abs" style="left:9.5px;top:171.8px;width:166.5px;height:64.4px;background:#dddddd"></div>
<div class="abs" style="left:44.4px;top:171.8px;width:131.6px;height:64.4px;background:#fff"></div>
<div class="abs" style="left:17.2px;top:193.8px;width:19.8px;height:19.8px;background:#fff"></div>
<svg class="abs" style="left:20.4px;top:197px" width="14" height="14" viewBox="0 0 14 14"><circle cx="5.6" cy="5.6" r="3.9" fill="none" stroke="#111" stroke-width="1.5"/><path d="M8.6 8.6 L12.4 12.4" stroke="#111" stroke-width="1.9" stroke-linecap="round"/><path d="M5.6 3.6 V7.6 M3.6 5.6 H7.6" stroke="#111" stroke-width="1.1"/></svg>
<svg class="abs" style="left:44.4px;top:171.8px" width="131.6" height="64.4" viewBox="483.4 171.8 131.6 64.4">
<g stroke="#6a6a6a" stroke-width=".3" fill="none">
<path d="M502 173 h9 M513 173 h6 M523 173 h8" stroke="#222" stroke-width=".9"/>
<rect x="527.6" y="174.6" width="1.6" height="1.2" fill="#4aa3e0" stroke="none"/><rect x="548" y="174.2" width="1.4" height="1.2" fill="#4aa3e0" stroke="none"/><rect x="563.6" y="174.2" width="1.4" height="1.2" fill="#4aa3e0" stroke="none"/>
<path d="M507 178 l3 3 l3 -3 M510 181 v5 M506 184 h9 M505.6 181.6 l2.6 1.4 M514.4 181.6 l-2.6 1.4 M516 183.4 h4" stroke-width=".5"/>
<path d="M502 189.6 h14 M504 192 h10" stroke-width=".6"/>
<path d="M503 195.6 q2 -2.2 3 0 t3 0 t3 0 t3 -.6 t4 -1.4" stroke="#111" stroke-width=".9"/>
<rect x="524" y="182" width="12" height="8.6"/><path d="M522 186.4 h16 M528 179 v14 M532 180 v12 M525 184 h10 M525 188.6 h10 M536 183.6 h3.6 v5.6 h-3.6" stroke-width=".4"/>
<path d="M527 177.4 q3 -1.8 6 0 M526 193.6 l2 1.6 M533 193.4 l2 1.8" stroke-width=".4"/>
<rect x="527.4" y="185.6" width="1.6" height="1.3" fill="#4aa3e0" stroke="none"/>
<rect x="545" y="182" width="12" height="8.6"/><path d="M543 186.4 h16 M549 179 v14 M553 180 v12 M546 184 h10 M546 188.6 h10 M557 183.6 h3.6 v5.6 h-3.6" stroke-width=".4"/>
<path d="M548 177.4 q3 -1.8 6 0 M547 193.6 l2 1.6 M554 193.4 l2 1.8" stroke-width=".4"/>
<rect x="548.4" y="185.6" width="1.6" height="1.3" fill="#4aa3e0" stroke="none"/>
<rect x="562" y="182" width="12" height="8.6"/><path d="M560 186.4 h16 M566 179 v14 M570 180 v12 M563 184 h10 M563 188.6 h10 M574 183.6 h3.6 v5.6 h-3.6" stroke-width=".4"/>
<path d="M565 177.4 q3 -1.8 6 0 M564 193.6 l2 1.6 M571 193.4 l2 1.8" stroke-width=".4"/>
<rect x="565.4" y="185.6" width="1.6" height="1.3" fill="#4aa3e0" stroke="none"/>
<rect x="582" y="187" width="13.6" height="9.6" fill="#e9eff6" stroke="#345" stroke-width=".4"/><path d="M582 189.4 h13.6 M582 191.8 h13.6 M582 194.2 h13.6 M585.4 187 v9.6 M588.8 187 v9.6 M592.2 187 v9.6" stroke="#234" stroke-width=".5"/><path d="M583 185.6 h5 M590 185.6 h5" stroke="#111" stroke-width=".8"/><rect x="588" y="194.8" width="1.6" height="1.6" fill="#e040a0" stroke="none"/>
<path d="M502 198.2 h4 M540 198.2 h2" stroke="#111" stroke-width=".7"/>
<rect x="502" y="199.4" width="72" height="8.6" fill="#b7d6f1" stroke="#345" stroke-width=".35"/>
<path d="M502 201.4 h72 M502 203.6 h72 M502 205.8 h72" stroke="#456" stroke-width=".35"/>
<path d="M504.4 199.4 v8.6 M506.8 199.4 v8.6 M509.2 199.4 v8.6 M511.6 199.4 v8.6 M514.0 199.4 v8.6 M516.4 199.4 v8.6 M518.8 199.4 v8.6 M521.2 199.4 v8.6 M523.6 199.4 v8.6 M526.0 199.4 v8.6 M528.4 199.4 v8.6 M530.8 199.4 v8.6 M533.2 199.4 v8.6 M535.6 199.4 v8.6 M538.0 199.4 v8.6 M540.4 199.4 v8.6 M542.8 199.4 v8.6 M545.2 199.4 v8.6 M547.6 199.4 v8.6 M550.0 199.4 v8.6 M552.4 199.4 v8.6 M554.8 199.4 v8.6 M557.2 199.4 v8.6 M559.6 199.4 v8.6 M562.0 199.4 v8.6 M564.4 199.4 v8.6 M566.8 199.4 v8.6 M569.2 199.4 v8.6 M571.6 199.4 v8.6" stroke="#345" stroke-width=".45"/>
<path d="M503.0 200.2 h1.2 M505.4 202.4 h1.2 M507.8 204.6 h1.2 M510.2 200.2 h1.2 M512.6 202.4 h1.2 M515.0 204.6 h1.2 M517.4 200.2 h1.2 M519.8 202.4 h1.2 M522.2 204.6 h1.2 M524.6 200.2 h1.2 M527.0 202.4 h1.2 M529.4 204.6 h1.2 M531.8 200.2 h1.2 M534.2 202.4 h1.2 M536.6 204.6 h1.2 M539.0 200.2 h1.2 M541.4 202.4 h1.2 M543.8 204.6 h1.2 M546.2 200.2 h1.2 M548.6 202.4 h1.2 M551.0 204.6 h1.2 M553.4 200.2 h1.2 M555.8 202.4 h1.2 M558.2 204.6 h1.2 M560.6 200.2 h1.2 M563.0 202.4 h1.2 M565.4 204.6 h1.2 M567.8 200.2 h1.2 M570.2 202.4 h1.2" stroke="#123" stroke-width=".7"/>
<rect x="575.6" y="199.4" width="20" height="8.6" fill="#c3dcf3" stroke="#345" stroke-width=".35"/><path d="M575.6 201.4 h20 M575.6 203.6 h20 M575.6 205.8 h20 M579.6 199.4 v8.6 M583.6 199.4 v8.6 M587.6 199.4 v8.6 M591.6 199.4 v8.6" stroke="#345" stroke-width=".4"/><path d="M576 198.2 h8 M586 198.2 h8" stroke="#111" stroke-width=".7"/>
<path d="M502 210.4 h12 M516 210.4 h10 M530 210.4 h7 M540 210.4 h12 M556 210.4 h8" stroke="#333" stroke-width=".6"/>
<path d="M505 213.4 h5 M520 213.4 h6 M534 213 h5 M552 213.4 h4 M566 213 h5 M584 213.2 h5" stroke="#333" stroke-width=".5"/>
<rect x="503.6" y="212.8" width="1.4" height="1.2" fill="#4aa3e0" stroke="none"/>
<rect x="517.6" y="212.8" width="1.4" height="1.2" fill="#4aa3e0" stroke="none"/>
<rect x="531.6" y="212.8" width="1.4" height="1.2" fill="#4aa3e0" stroke="none"/>
<rect x="549.6" y="212.8" width="1.4" height="1.2" fill="#4aa3e0" stroke="none"/>
<rect x="563.6" y="212.8" width="1.4" height="1.2" fill="#4aa3e0" stroke="none"/>
<rect x="582" y="212.8" width="1.4" height="1.2" fill="#4aa3e0" stroke="none"/>
<circle cx="510" cy="221.6" r="4.4"/><circle cx="510" cy="221.6" r="1.2"/><path d="M503.6 221.6 h12.8 M510 215.6 v12" stroke-width=".3"/>
<circle cx="522.6" cy="221.6" r="2.6"/><path d="M518 217 l9 8 M519 226 h8 M522.6 216 v11" stroke-width=".35"/>
<circle cx="538" cy="222.6" r="2.2"/><path d="M533.6 218 l3 3 M542.4 218 l-3 3 M538 216 v12 M533 226.6 h10" stroke-width=".35"/>
<rect x="549" y="218.6" width="8" height="6.6"/><path d="M547 222 h12 M551.6 216.6 v10.8 M554.4 216.6 v10.8 M557 220 h2.6 v4 h-2.6" stroke-width=".4"/><rect x="552" y="221.2" width="1.6" height="1.4" fill="#333" stroke="none"/>
<rect x="562" y="218.6" width="8" height="6.6"/><path d="M560 222 h12 M564.6 216.6 v10.8 M567.4 216.6 v10.8 M570 220 h2.6 v4 h-2.6" stroke-width=".4"/><rect x="565" y="221.2" width="1.6" height="1.4" fill="#333" stroke="none"/>
<rect x="577" y="218.6" width="8" height="6.6"/><path d="M575 222 h12 M579.6 216.6 v10.8 M582.4 216.6 v10.8 M585 220 h2.6 v4 h-2.6" stroke-width=".4"/><rect x="580" y="221.2" width="1.6" height="1.4" fill="#333" stroke="none"/>
<rect x="590" y="218.6" width="8" height="6.6"/><path d="M588 222 h12 M592.6 216.6 v10.8 M595.4 216.6 v10.8 M598 220 h2.6 v4 h-2.6" stroke-width=".4"/><rect x="593" y="221.2" width="1.6" height="1.4" fill="#333" stroke="none"/>
<path d="M503 230.4 q1.6 -1.8 2.6 0 t2.6 0 t2.6 -.4 M503.4 233 q1.8 -1.6 3 0 t3 .2 t2.4 -.6 M503 235.2 h8" stroke="#111" stroke-width=".9"/>
<rect x="503" y="228.4" width="2" height="1.2" fill="#e040a0" stroke="none"/><rect x="510.6" y="233.6" width="1.8" height="1.2" fill="#e040a0" stroke="none"/><rect x="507" y="234.6" width="1.4" height="1.2" fill="#35a6e6" stroke="none"/>
<path d="M516 230.4 q1.6 -1.8 2.6 0 t2.6 0 t2.6 -.4 M516.4 233 q1.8 -1.6 3 0 t3 .2 t2.4 -.6 M516 235.2 h8" stroke="#111" stroke-width=".9"/>
<rect x="516" y="228.4" width="2" height="1.2" fill="#e040a0" stroke="none"/><rect x="523.6" y="233.6" width="1.8" height="1.2" fill="#e040a0" stroke="none"/><rect x="520" y="234.6" width="1.4" height="1.2" fill="#35a6e6" stroke="none"/>
<path d="M530 230.4 q1.6 -1.8 2.6 0 t2.6 0 t2.6 -.4 M530.4 233 q1.8 -1.6 3 0 t3 .2 t2.4 -.6 M530 235.2 h8" stroke="#111" stroke-width=".9"/>
<rect x="530" y="228.4" width="2" height="1.2" fill="#e040a0" stroke="none"/><rect x="537.6" y="233.6" width="1.8" height="1.2" fill="#e040a0" stroke="none"/><rect x="534" y="234.6" width="1.4" height="1.2" fill="#35a6e6" stroke="none"/>
<path d="M547 230.4 q1.6 -1.8 2.6 0 t2.6 0 t2.6 -.4 M547.4 233 q1.8 -1.6 3 0 t3 .2 t2.4 -.6 M547 235.2 h8" stroke="#111" stroke-width=".9"/>
<rect x="547" y="228.4" width="2" height="1.2" fill="#e040a0" stroke="none"/><rect x="554.6" y="233.6" width="1.8" height="1.2" fill="#e040a0" stroke="none"/><rect x="551" y="234.6" width="1.4" height="1.2" fill="#35a6e6" stroke="none"/>
<path d="M562 230.4 q1.6 -1.8 2.6 0 t2.6 0 t2.6 -.4 M562.4 233 q1.8 -1.6 3 0 t3 .2 t2.4 -.6 M562 235.2 h8" stroke="#111" stroke-width=".9"/>
<rect x="562" y="228.4" width="2" height="1.2" fill="#e040a0" stroke="none"/><rect x="569.6" y="233.6" width="1.8" height="1.2" fill="#e040a0" stroke="none"/><rect x="566" y="234.6" width="1.4" height="1.2" fill="#35a6e6" stroke="none"/>
<path d="M578 230.4 q1.6 -1.8 2.6 0 t2.6 0 t2.6 -.4 M578.4 233 q1.8 -1.6 3 0 t3 .2 t2.4 -.6 M578 235.2 h8" stroke="#111" stroke-width=".9"/>
<rect x="578" y="228.4" width="2" height="1.2" fill="#e040a0" stroke="none"/><rect x="585.6" y="233.6" width="1.8" height="1.2" fill="#e040a0" stroke="none"/><rect x="582" y="234.6" width="1.4" height="1.2" fill="#35a6e6" stroke="none"/>
<path d="M592 230.4 q1.6 -1.8 2.6 0 t2.6 0 t2.6 -.4 M592.4 233 q1.8 -1.6 3 0 t3 .2 t2.4 -.6 M592 235.2 h8" stroke="#111" stroke-width=".9"/>
<rect x="592" y="228.4" width="2" height="1.2" fill="#e040a0" stroke="none"/><rect x="599.6" y="233.6" width="1.8" height="1.2" fill="#e040a0" stroke="none"/><rect x="596" y="234.6" width="1.4" height="1.2" fill="#35a6e6" stroke="none"/>
</g></svg>
<div class="t" style="transform-origin:0 0;transform:scaleX(0.801);left:8.6px;top:247.3px;font-size:5.4px;color:#333">使用ベルト幅(mm)</div>
<div class="abs" style="left:58.7px;top:243.7px;width:39.3px;height:12.4px;background:#fff;border:1px solid #a9abad;border-radius:1.5px"></div><div class="t" style="transform-origin:0 0;transform:scaleX(0.831);left:61.9px;top:246.9px;font-size:5.2px;color:#222">4.8</div><svg class="abs" style="left:89.8px;top:247.6px" width="5" height="4" viewBox="0 0 5 4"><path d="M.6 .8 L2.5 2.8 L4.4 .8" fill="none" stroke="#444" stroke-width=".7"/></svg>
<div class="t" style="transform-origin:0 0;transform:scaleX(0.889);left:8.6px;top:261.4px;font-size:5.4px;color:#333">歯数</div>
<div class="abs" style="left:58.7px;top:258.2px;width:39.3px;height:12.3px;background:#fff;border:1px solid #a9abad;border-radius:1.5px"></div><div class="t" style="transform-origin:0 0;transform:scaleX(0.865);left:61.9px;top:261.3px;font-size:5.2px;color:#222">72</div><svg class="abs" style="left:89.8px;top:262.0px" width="5" height="4" viewBox="0 0 5 4"><path d="M.6 .8 L2.5 2.8 L4.4 .8" fill="none" stroke="#444" stroke-width=".7"/></svg>
<div class="t" style="transform-origin:0 0;transform:scaleX(0.871);left:8.6px;top:276.5px;font-size:5.6px;font-weight:bold;color:#222">軸穴仕様</div>
<div class="abs" style="left:6.6px;top:289.3px;width:176.8px;height:36.4px;border:.9px solid #3c3e40;border-radius:3px"></div>
<div class="abs" style="left:10.0px;top:286px;width:124px;height:7px;background:#c4c6c8"></div>
<div class="abs" style="left:10.7px;top:286.0px;width:6.8px;height:6.8px;border-radius:50%;background:#fff"></div>
<div class="abs" style="left:12.5px;top:287.8px;width:3.2px;height:3.2px;border-radius:50%;background:#1769d2"></div>
<div class="t" style="transform-origin:0 0;transform:scaleX(0.907);left:21.2px;top:286.8px;font-size:5.2px;color:#333">H</div>
<div class="abs" style="left:28.3px;top:286.0px;width:6.8px;height:6.8px;border-radius:50%;background:#fff"></div>
<div class="t" style="transform-origin:0 0;transform:scaleX(0.96);left:38.6px;top:286.8px;font-size:5.2px;color:#333">N</div>
<div class="abs" style="left:45.6px;top:286.0px;width:6.8px;height:6.8px;border-radius:50%;background:#fff"></div>
<div class="t" style="transform-origin:0 0;transform:scaleX(0.97);left:55.6px;top:286.8px;font-size:5.2px;color:#333">NK</div>
<div class="abs" style="left:65.8px;top:286.0px;width:6.8px;height:6.8px;border-radius:50%;background:#fff"></div>
<div class="t" style="transform-origin:0 0;transform:scaleX(0.96);left:75.6px;top:286.8px;font-size:5.2px;color:#333">C</div>
<div class="abs" style="left:82.4px;top:286.0px;width:6.8px;height:6.8px;border-radius:50%;background:#fff"></div>
<div class="t" style="transform-origin:0 0;transform:scaleX(0.98);left:92.4px;top:286.8px;font-size:5.2px;color:#333">V</div>
<div class="abs" style="left:98.9px;top:286.0px;width:6.8px;height:6.8px;border-radius:50%;background:#fff"></div>
<div class="t" style="transform-origin:0 0;transform:scaleX(0.98);left:109.0px;top:286.8px;font-size:5.2px;color:#333">Y</div>
<div class="abs" style="left:115.2px;top:286.0px;width:6.8px;height:6.8px;border-radius:50%;background:#fff"></div>
<div class="t" style="transform-origin:0 0;transform:scaleX(0.909);left:124.6px;top:286.8px;font-size:5.2px;color:#333">WB</div>
<div class="t" style="transform-origin:0 0;transform:scaleX(1.0);left:13.4px;top:298.9px;font-size:5.2px;color:#333">丸穴 [d]</div>
<div class="abs" style="left:63.8px;top:295.2px;width:38.8px;height:12.3px;background:#fff;border:1px solid #a9abad;border-radius:1.5px"></div><div class="t" style="transform-origin:0 0;transform:scaleX(0.969);left:67.0px;top:298.3px;font-size:5.2px;color:#222">8</div><svg class="abs" style="left:94.4px;top:299.0px" width="5" height="4" viewBox="0 0 5 4"><path d="M.6 .8 L2.5 2.8 L4.4 .8" fill="none" stroke="#444" stroke-width=".7"/></svg>
<div class="t" style="transform-origin:0 0;transform:scaleX(1.049);left:127.0px;top:298.9px;font-size:4.8px;color:#444">[6.35]</div>
<div class="t" style="transform-origin:0 0;transform:scaleX(0.849);left:9.0px;top:337.1px;font-size:5.2px;color:#444">P.D.</div>
<div class="t" style="transform-origin:0 0;transform:scaleX(0.843);left:9.0px;top:350.3px;font-size:5.2px;color:#444">O.D.</div>
<!-- bottom section -->
<div class="abs" style="left:1px;top:357.4px;width:190px;height:62px;background:#46494c"></div>
<div class="abs" style="left:0;top:419.4px;width:191px;height:1.6px;background:#8f9092"></div>
<div class="t" style="transform-origin:0 0;transform:scaleX(0.798);left:9.6px;top:365.2px;font-size:5.6px;font-weight:bold;color:#fff">型番：</div>
<div class="t" style="transform-origin:0 0;transform:scaleX(1.061);left:35px;top:365.4px;font-size:5.6px;font-weight:bold;color:#fff">ATP72MXL019-A-H8</div>
<div class="t" style="transform-origin:0 0;transform:scaleX(0.804);left:128.6px;top:364.6px;font-size:5.6px;font-weight:bold;color:#fff">お気に入り</div>
<svg class="abs" style="left:153px;top:362.4px" width="11" height="10" viewBox="0 0 11 10"><path d="M5.4 1 L6.7 3.8 L9.8 4.1 L7.5 6.2 L8.2 9.2 L5.4 7.6 L2.6 9.2 L3.3 6.2 L1 4.1 L4.1 3.8 Z" fill="none" stroke="#fff" stroke-width="1.1" stroke-linejoin="round"/></svg>
<div class="abs" style="left:167.4px;top:362px;width:.7px;height:12px;background:#85878a"></div>
<svg class="abs" style="left:173.4px;top:363.8px" width="6" height="7.7" viewBox="0 0 7 9"><rect x="2" y="2.4" width="4" height="5.4" rx=".8" fill="none" stroke="#f0f0f0" stroke-width=".9"/><path d="M1 6 V1.6 Q1 .8 1.8 .8 H4.4" fill="none" stroke="#f0f0f0" stroke-width=".8"/></svg>
<div class="abs" style="left:9px;top:376px;width:177px;height:.8px;background:#85878a"></div>
<div class="t" style="transform-origin:0 0;transform:scaleX(0.798);left:9.6px;top:381.8px;font-size:5.6px;font-weight:bold;color:#fff">単価：</div>
<div class="t" style="left:45px;top:381.8px;font-size:5.6px;color:#fff">・</div>
<div class="t" style="transform-origin:0 0;transform:scaleX(0.804);left:93.2px;top:381.8px;font-size:5.6px;font-weight:bold;color:#fff">出荷日：</div>
<div class="t" style="left:124.4px;top:381.8px;font-size:5.6px;color:#fff">・</div>
<!-- blue button -->
<div class="abs" style="left:7.2px;top:395.8px;width:86.5px;height:17.1px;background:linear-gradient(#2a93f2,#1269cf 70%,#0d5cba);border-radius:1px"></div>
<svg class="abs" style="left:30.2px;top:400.2px" width="8" height="9" viewBox="0 0 8 9"><path d="M1.2 4.2 A2.9 2.9 0 0 1 6.2 2.4 M6.8 4.8 A2.9 2.9 0 0 1 1.8 6.6" fill="none" stroke="#fff" stroke-width="1"/><path d="M5.2 .8 L7 2.8 L4.6 3.2 Z M2.8 8.2 L1 6.2 L3.4 5.8 Z" fill="#fff"/></svg>
<div class="t" style="transform-origin:0 0;transform:scaleX(0.768);left:40px;top:401.7px;font-size:6.8px;font-weight:bold;color:#fff">モデルに反映</div>
<!-- yellow small pill -->
<div class="abs" style="left:100px;top:396px;width:85.6px;height:16.8px;border-radius:8.4px;background:linear-gradient(#ffd012,#fbb800 60%,#f5a900);border:.6px solid #a97a00"></div>
<svg class="abs" style="left:121px;top:400.4px" width="8" height="8" viewBox="0 0 8 8"><path d="M.6 1.4 Q.6 .6 1.4 .6 H6 L7.4 2 V6.6 Q7.4 7.4 6.6 7.4 H1.4 Q.6 7.4 .6 6.6 Z" fill="#1a1a1a"/><rect x="1.8" y="1.6" width="3.8" height="1.5" fill="#ffd012"/><circle cx="4" cy="5.3" r="1.1" fill="#ffd012"/></svg>
<div class="t" style="transform-origin:0 0;transform:scaleX(0.851);left:130.9px;top:401.4px;font-size:6.8px;font-weight:bold;color:#222">型番付き保存</div>

</div>
<!-- callout (page coords) -->
<svg class="abs" style="left:0;top:0;pointer-events:none" width="668" height="421" viewBox="0 0 668 421">
  <path d="M570.6 361 H589 L580.9 388 Z" fill="#ff7514"/>
  <rect x="536.8" y="390.8" width="91.8" height="26.8" fill="none" stroke="#ff7514" stroke-width="3.1" stroke-dasharray="5.8 3.3" stroke-dashoffset=".8"/>
</svg>
<div class="abs" style="left:490.4px;top:311.8px;width:177.6px;height:50.2px;background:#4a4d50;border:4.2px solid #ff7514;border-right-width:3.6px"></div>
<div class="abs" style="left:500.1px;top:320.6px;width:158.5px;height:31.9px;border-radius:16px;background:linear-gradient(#ffd114,#fdbd00 55%,#f4a600);border:.7px solid #a87900"></div>
<svg class="abs" style="left:539.2px;top:329.2px" width="15.4" height="15.4" viewBox="0 0 8 8"><path d="M.5 1.4 Q.5 .5 1.4 .5 H5.9 L7.5 2.1 V6.6 Q7.5 7.5 6.6 7.5 H1.4 Q.5 7.5 .5 6.6 Z" fill="#161616"/><rect x="1.7" y="1.6" width="3.9" height="1.5" fill="#ffd114"/><circle cx="4" cy="5.3" r="1.15" fill="#ffd114"/></svg>
<div class="t" style="transform-origin:0 0;transform:scaleX(0.856);left:556.7px;top:331.8px;font-size:12.6px;font-weight:bold;color:#1c1c1c">型番付き保存</div>

</body>
</html>
